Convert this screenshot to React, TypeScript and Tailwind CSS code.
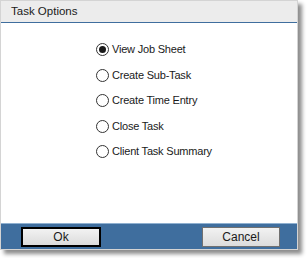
import React from "react";

const options = [
  "View Job Sheet",
  "Create Sub-Task",
  "Create Time Entry",
  "Close Task",
  "Client Task Summary",
];

function Radio({ checked }: { checked: boolean }) {
  return (
    <span className="w-[13px] h-[13px] rounded-full border border-[#333] bg-white flex items-center justify-center shrink-0">
      {checked && <span className="w-[7px] h-[7px] rounded-full bg-[#1a1a1a]" />}
    </span>
  );
}

export default function App() {
  return (
    <div className="w-[307px] h-[258px] bg-white relative" style={{ fontFamily: "'Liberation Sans', Arial, sans-serif" }}>
      <div className="w-[298px] h-[250px] flex flex-col border border-[#d4d4d4] bg-white shadow-[4px_4px_4px_rgba(0,0,0,0.45)]">
        <div className="h-[22px] bg-[#ececec] border-b border-[#3f6e9e] flex items-center pl-[10px] text-[11.5px] text-[#1a1a1a] shrink-0">
          Task Options
        </div>
        <div className="flex-1 flex flex-col items-start pl-[95px] pt-[20px] gap-[12.5px]">
          {options.map((o, i) => (
            <div key={o} className="flex items-center gap-[3px] h-[13px] text-[11px] tracking-[-0.2px] text-[#1a1a1a]">
              <Radio checked={i === 0} />
              <span>{o}</span>
            </div>
          ))}
        </div>
        <div className="h-[26px] bg-[#3f6e9e] border-t border-[#8fb0d0] flex items-center justify-between pl-[20px] pr-[17px] shrink-0">
          <button className="w-[80px] h-[20px] border-2 border-black bg-gradient-to-b from-[#f2f2f2] to-[#dcdcdc] text-[12px] text-[#1a1a1a] flex items-center justify-center">
            Ok
          </button>
          <button className="w-[78px] h-[20px] border border-[#707070] bg-gradient-to-b from-[#f2f2f2] to-[#dcdcdc] text-[12px] text-[#1a1a1a] flex items-center justify-center">
            Cancel
          </button>
        </div>
      </div>
    </div>
  );
}
